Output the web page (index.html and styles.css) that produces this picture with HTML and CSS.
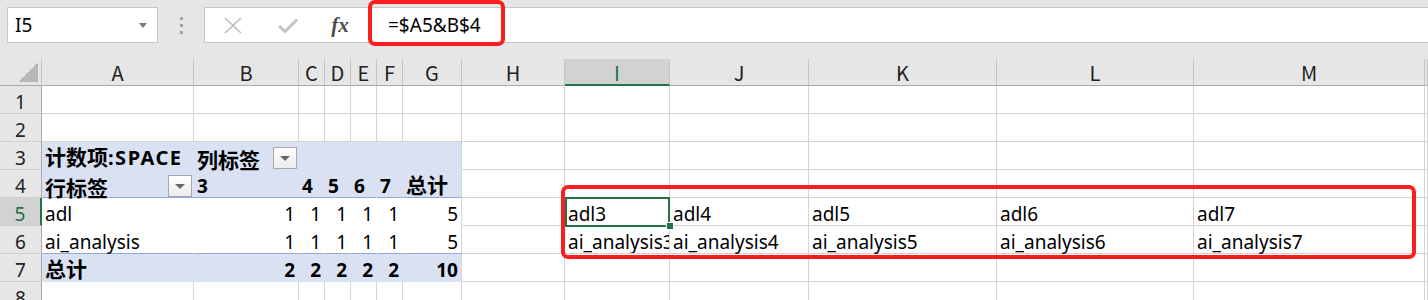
FILE: index.html
```html
<!DOCTYPE html>
<html lang="zh-CN">
<head>
    <meta charset="UTF-8">
    <title>Excel - 数据透视表</title>
    <link rel="stylesheet" href="styles.css">
</head>
<body>
    <div class="ribbon">
        <div class="namebox"><span>I5</span><i class="caret"></i></div>
        <div class="grip"><b></b><b></b><b></b></div>
        <div class="fbar">
            <span class="slot">
                <svg width="18" height="17" viewBox="0 0 18 17"><path d="M1 1 L17 16 M17 1 L1 16" stroke="#bcbcbc" stroke-width="1.6" fill="none"/></svg>
            </span>
            <span class="slot">
                <svg width="20" height="15" viewBox="0 0 20 15"><path d="M1 8 L7 13.5 L19 1.5" stroke="#c4c4c4" stroke-width="3" fill="none"/></svg>
            </span>
            <span class="slot fx">fx</span>
            <div class="formula">=$A5&amp;B$4</div>
        </div>
    </div>

    <table class="sheet">
        <colgroup>
            <col style="width:42px"><col style="width:152px"><col style="width:105px">
            <col style="width:26px"><col style="width:26px"><col style="width:26px"><col style="width:26px">
            <col style="width:59px"><col style="width:103px"><col style="width:105px">
            <col style="width:139px"><col style="width:188px"><col style="width:197px">
            <col style="width:231px"><col style="width:3px">
        </colgroup>
        <tr class="cols">
            <td class="corner"></td><td>A</td><td>B</td><td>C</td><td>D</td><td>E</td><td>F</td><td>G</td>
            <td>H</td><td class="csel">I</td><td>J</td><td>K</td><td>L</td><td>M</td><td></td>
        </tr>
        <tr>
            <td class="rh">1</td><td></td><td></td><td></td><td></td><td></td><td></td><td></td>
            <td></td><td></td><td></td><td></td><td></td><td></td><td></td>
        </tr>
        <tr>
            <td class="rh">2</td><td></td><td></td><td></td><td></td><td></td><td></td><td></td>
            <td></td><td></td><td></td><td></td><td></td><td></td><td></td>
        </tr>
        <tr>
            <td class="rh">3</td>
            <td class="pv"><span class="zh">计数项</span><span class="caps">:SPACE</span></td>
            <td class="pv"><div class="lab"><span class="zh">列标签</span><span class="dd"></span></div></td>
            <td class="pv"></td><td class="pv"></td><td class="pv"></td><td class="pv"></td><td class="pv end"></td>
            <td></td><td></td><td></td><td></td><td></td><td></td><td></td>
        </tr>
        <tr>
            <td class="rh">4</td>
            <td class="pv line"><div class="lab"><span class="zh">行标签</span><span class="dd"></span></div></td>
            <td class="pv line">3</td><td class="pv line">4</td><td class="pv line">5</td><td class="pv line">6</td><td class="pv line">7</td>
            <td class="pv line end"><span class="zh">总计</span></td>
            <td></td><td></td><td></td><td></td><td></td><td></td><td></td>
        </tr>
        <tr>
            <td class="rh rsel">5</td>
            <td class="pb">adl</td>
            <td class="pb num">1</td><td class="pb num">1</td><td class="pb num">1</td><td class="pb num">1</td><td class="pb num">1</td>
            <td class="pb num end">5</td>
            <td></td><td class="sel">adl3</td><td>adl4</td><td>adl5</td><td>adl6</td><td>adl7</td><td></td>
        </tr>
        <tr>
            <td class="rh">6</td>
            <td class="pb line">ai_analysis</td>
            <td class="pb line num">1</td><td class="pb line num">1</td><td class="pb line num">1</td><td class="pb line num">1</td><td class="pb line num">1</td>
            <td class="pb line num end">5</td>
            <td></td><td class="clip">ai_analysis3</td><td>ai_analysis4</td><td>ai_analysis5</td><td>ai_analysis6</td><td>ai_analysis7</td><td></td>
        </tr>
        <tr>
            <td class="rh">7</td>
            <td class="pv"><span class="zh">总计</span></td>
            <td class="pv num">2</td><td class="pv num">2</td><td class="pv num">2</td><td class="pv num">2</td><td class="pv num">2</td>
            <td class="pv num end">10</td>
            <td></td><td></td><td></td><td></td><td></td><td></td><td></td>
        </tr>
        <tr>
            <td class="rh">8</td><td></td><td></td><td></td><td></td><td></td><td></td><td></td>
            <td></td><td></td><td></td><td></td><td></td><td></td><td></td>
        </tr>
    </table>

    <div class="mark mark-formula"></div>
    <div class="mark mark-range"></div>
</body>
</html>
```

FILE: styles.css
```css
body {
    margin: 0;
    width: 1428px;
    height: 300px;
    overflow: hidden;
    position: relative;
    background-color: #fff;
    font-family: "Noto Sans", "Noto Sans CJK SC", sans-serif;
    font-size: 19px;
    color: #000;
}
.zh {
    font-family: "Noto Sans CJK SC", sans-serif;
    font-size: 21px;
    line-height: 20px;
}
.caps {
    font-size: 20px;
    letter-spacing: 1.5px;
    line-height: 20px;
}
.ribbon {
    height: 59px;
    box-sizing: border-box;
    padding: 7px 0 0 7px;
    background-color: #e6e6e6;
    display: flex;
    align-items: flex-start;
}
.namebox {
    width: 151px;
    height: 36px;
    box-sizing: border-box;
    background-color: #fff;
    border: 1px solid #c6c6c6;
    display: flex;
    align-items: center;
    justify-content: space-between;
    padding: 0 10px 0 7px;
    line-height: 34px;
}
.caret {
    border-left: 4px solid transparent;
    border-right: 4px solid transparent;
    border-top: 5px solid #7a7a7a;
}
.grip {
    width: 46px;
    height: 36px;
    display: flex;
    flex-direction: column;
    align-items: center;
    justify-content: center;
    gap: 4px;
}
.grip b {
    width: 3px;
    height: 3px;
    background-color: #a3a3a3;
}
.fbar {
    flex: 1;
    height: 36px;
    box-sizing: border-box;
    background-color: #fff;
    border: 1px solid #c6c6c6;
    border-right: none;
    display: flex;
    align-items: center;
}
.slot {
    width: 54px;
    display: flex;
    justify-content: center;
}
.slot:first-child {
    width: 56px;
}
.fx {
    width: 50px;
    font-family: "Liberation Serif", serif;
    font-style: italic;
    font-weight: bold;
    font-size: 21px;
    color: #4d4d4d;
    line-height: 34px;
}
.formula {
    padding-left: 23px;
    line-height: 34px;
}
.sheet {
    width: 1428px;
    table-layout: fixed;
    border-spacing: 0;
}
.sheet tr {
    height: 28px;
}
.sheet td {
    box-sizing: border-box;
    padding: 0 3px;
    border-right: 1px solid #d4d4d4;
    border-bottom: 1px solid #d4d4d4;
    white-space: nowrap;
    line-height: 22px;
    vertical-align: bottom;
}
.sheet tr.cols {
    height: 27px;
}
.sheet .cols td {
    background-color: #e6e6e6;
    color: #222;
    font-family: "Noto Sans CJK SC", sans-serif;
    font-size: 20px;
    text-align: center;
    border-right-color: #c4c4c4;
    border-bottom-color: #ababab;
    line-height: 23px;
    padding-top: 2px;
    vertical-align: top;
}
.cols .corner {
    background: linear-gradient(to top left, #b7b7b7 50%, transparent 50%) no-repeat right 3px bottom 3px / 20px 20px, #e6e6e6;
    border-right-color: #ababab;
}
.sheet .cols .csel {
    background-color: #d2d2d2;
    color: #217346;
    border-bottom: 2px solid #217346;
}
.rh {
    background-color: #e6e6e6;
    color: #222;
    text-align: center;
}
.sheet td.rh {
    border-right-color: #ababab;
    border-bottom-color: #d0d0d0;
}
.sheet td.rsel {
    background-color: #d2d2d2;
    color: #217346;
    border-right: 2px solid #217346;
}
.sheet td.pv {
    background-color: #d9e1f2;
    font-weight: bold;
    border-right-color: transparent;
    border-bottom-color: transparent;
}
.sheet td.pb {
    border-right-color: transparent;
    border-bottom-color: transparent;
}
.sheet td.line {
    border-bottom-color: #8ea9db;
}
.sheet td.end {
    border-right-color: #d4d4d4;
}
.num {
    text-align: right;
}
.lab {
    display: flex;
    align-items: flex-end;
    justify-content: space-between;
    margin-right: -2px;
}
.dd {
    width: 24px;
    height: 22px;
    box-sizing: border-box;
    border: 1px solid #a9a9a9;
    background: linear-gradient(#fff, #ececec);
    display: flex;
    align-items: center;
    justify-content: center;
}
.dd::after {
    content: "";
    border-left: 5px solid transparent;
    border-right: 5px solid transparent;
    border-top: 5px solid #666;
}
.sel {
    position: relative;
}
.sel::before {
    content: "";
    position: absolute;
    top: -1px;
    left: 0;
    right: -1px;
    bottom: -2px;
    border: 2px solid #217346;
}
.sel::after {
    content: "";
    position: absolute;
    right: -5px;
    bottom: -5px;
    width: 6px;
    height: 6px;
    background-color: #217346;
    border: 1px solid #fff;
}
.clip {
    overflow: hidden;
    text-overflow: clip;
}
.mark {
    position: absolute;
    box-sizing: border-box;
    border: 4px solid #fb1e1e;
    border-radius: 7px;
}
.mark-formula {
    left: 368px;
    top: 0;
    width: 137px;
    height: 46px;
}
.mark-range {
    left: 561px;
    top: 185px;
    width: 855px;
    height: 74px;
}
```
